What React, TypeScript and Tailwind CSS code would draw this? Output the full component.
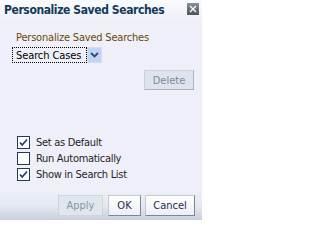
import React from "react";

const font = { fontFamily: '"DejaVu Sans Condensed", "DejaVu Sans", sans-serif' };

function Check({ checked }: { checked: boolean }) {
  return (
    <svg width="13" height="13" viewBox="0 0 13 13" className="shrink-0">
      <rect x="0.5" y="0.5" width="12" height="12" fill="#ffffff" stroke="#1f3a5a" />
      {checked && (
        <path d="M3 6.5 L5.2 9 L10 3.5" fill="none" stroke="#23406a" strokeWidth="1.8" />
      )}
    </svg>
  );
}

export default function App() {
  return (
    <div
      className="w-[202px] h-[220px] bg-[#eeeff8] flex flex-col overflow-hidden text-[11px] leading-[13px]"
      style={font}
    >
      {/* title bar */}
      <div className="h-[22px] flex justify-between items-start bg-gradient-to-b from-[#fafbfd] to-[#eeeff8]">
        <div className="pl-[4px] pt-[3px] font-bold text-[12px] leading-[14px] text-[#133a5a] tracking-[-0.4px] whitespace-nowrap">
          Personalize Saved Searches
        </div>
        <div className="mt-[3px] mr-[3px] w-[12px] h-[12px] bg-gradient-to-b from-[#8a9098] to-[#4c545c] flex items-center justify-center">
          <svg width="8" height="8" viewBox="0 0 8 8">
            <path d="M1 1 L7 7 M7 1 L1 7" stroke="#ffffff" strokeWidth="1.3" />
          </svg>
        </div>
      </div>

      {/* body */}
      <div className="pl-[16px] pt-[9px] text-[#6a4a05] tracking-[-0.2px] whitespace-nowrap">
        Personalize Saved Searches
      </div>
      <div className="pl-[12px] pt-[3px] flex">
        <div className="flex h-[16px]">
          <div className="w-[75px] border border-dotted border-black flex items-center pl-[3px] text-black whitespace-nowrap tracking-[-0.1px]">
            Search Cases
          </div>
          <div className="w-[15px] bg-[#c3d3f3] border border-[#d6dcea] flex items-center justify-center">
            <svg width="9" height="6" viewBox="0 0 9 6">
              <path d="M1 1 L4.5 4.5 L8 1" fill="none" stroke="#2b4a80" strokeWidth="1.8" />
            </svg>
          </div>
        </div>
      </div>
      <div className="flex justify-end pr-[8px] pt-[7px]">
        <div className="w-[50px] h-[20px] bg-[#dde4ee] border border-[#c9d1dc] border-r-[#a9b2be] border-b-[#a9b2be] flex items-center justify-center text-[#7d8898]">
          Delete
        </div>
      </div>

      <div className="flex flex-col gap-[3px] pl-[17px] pt-[46px] text-[#1e1e1e] tracking-[-0.3px]">
        <div className="flex items-center gap-[6px] h-[13px]">
          <Check checked />
          <span className="whitespace-nowrap">Set as Default</span>
        </div>
        <div className="flex items-center gap-[6px] h-[13px]">
          <Check checked={false} />
          <span className="whitespace-nowrap">Run Automatically</span>
        </div>
        <div className="flex items-center gap-[6px] h-[13px]">
          <Check checked />
          <span className="whitespace-nowrap">Show in Search List</span>
        </div>
      </div>

      {/* footer */}
      <div className="mt-auto h-[30px] bg-gradient-to-b from-[#eeeff8] via-[#e6e9f2] to-[#c9d0dc] flex justify-end items-start pr-[7px] pt-[5px] gap-[4px]">
        <div className="w-[45px] h-[21px] bg-[#dfe6ee] border border-[#cdd5df] flex items-center justify-center text-[#8a94a2] mr-[1px]">
          Apply
        </div>
        <div className="w-[33px] h-[21px] bg-gradient-to-b from-white to-[#eceff6] border border-[#c2cad6] border-r-[#7c8696] border-b-[#7c8696] flex items-center justify-center text-[#1c2f4e]">
          OK
        </div>
        <div className="w-[50px] h-[21px] bg-gradient-to-b from-white to-[#eceff6] border border-[#c2cad6] border-r-[#7c8696] border-b-[#7c8696] flex items-center justify-center text-[#1c2f4e]">
          Cancel
        </div>
      </div>
    </div>
  );
}
